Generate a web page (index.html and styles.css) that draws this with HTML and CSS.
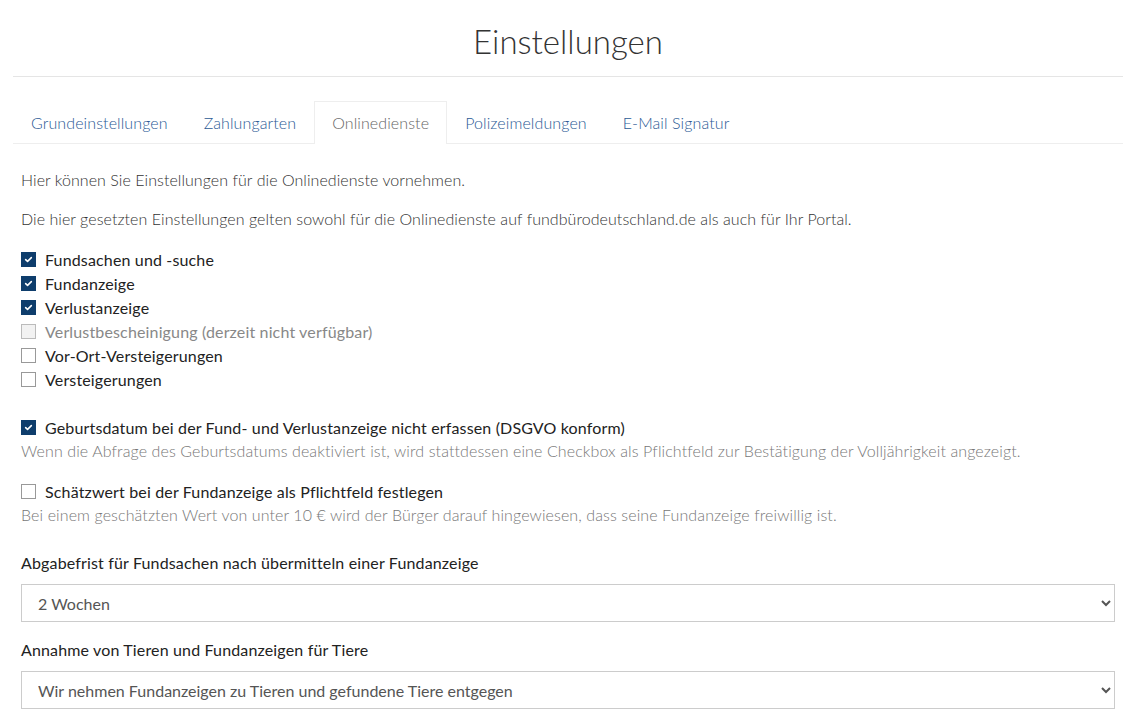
FILE: index.html
```html
<!DOCTYPE html>
<html lang="de">
<head>
    <meta charset="UTF-8">
    <meta name="viewport" content="width=device-width, initial-scale=1.0">
    <title>Einstellungen</title>
    <link rel="stylesheet" href="styles.css">
</head>
<body>
    <div class="page">
        <header class="page-header">
            <h1>Einstellungen</h1>
        </header>

        <nav class="tabs">
            <a class="tab" href="#">Grundeinstellungen</a>
            <a class="tab" href="#">Zahlungarten</a>
            <a class="tab active" href="#">Onlinedienste</a>
            <a class="tab" href="#">Polizeimeldungen</a>
            <a class="tab" href="#">E-Mail Signatur</a>
        </nav>

        <section class="content">
            <p class="intro">Hier können Sie Einstellungen für die Onlinedienste vornehmen.</p>
            <p class="intro">Die hier gesetzten Einstellungen gelten sowohl für die Onlinedienste auf fundbürodeutschland.de als auch für Ihr Portal.</p>

            <div class="check-list">
                <label class="check"><span class="box checked"><svg viewBox="0 0 15 15"><path d="M4.2 7.6l2.2 2.1 4.4-4.4" /></svg></span>Fundsachen und -suche</label>
                <label class="check"><span class="box checked"><svg viewBox="0 0 15 15"><path d="M4.2 7.6l2.2 2.1 4.4-4.4" /></svg></span>Fundanzeige</label>
                <label class="check"><span class="box checked"><svg viewBox="0 0 15 15"><path d="M4.2 7.6l2.2 2.1 4.4-4.4" /></svg></span>Verlustanzeige</label>
                <label class="check disabled"><span class="box"></span>Verlustbescheinigung (derzeit nicht verfügbar)</label>
                <label class="check"><span class="box"></span>Vor-Ort-Versteigerungen</label>
                <label class="check"><span class="box"></span>Versteigerungen</label>
            </div>

            <div class="option">
                <label class="check"><span class="box checked"><svg viewBox="0 0 15 15"><path d="M4.2 7.6l2.2 2.1 4.4-4.4" /></svg></span>Geburtsdatum bei der Fund- und Verlustanzeige nicht erfassen (DSGVO konform)</label>
                <p class="help">Wenn die Abfrage des Geburtsdatums deaktiviert ist, wird stattdessen eine Checkbox als Pflichtfeld zur Bestätigung der Volljährigkeit angezeigt.</p>
            </div>

            <div class="option">
                <label class="check"><span class="box"></span>Schätzwert bei der Fundanzeige als Pflichtfeld festlegen</label>
                <p class="help">Bei einem geschätzten Wert von unter 10 € wird der Bürger darauf hingewiesen, dass seine Fundanzeige freiwillig ist.</p>
            </div>

            <div class="field">
                <label for="abgabefrist">Abgabefrist für Fundsachen nach übermitteln einer Fundanzeige</label>
                <select id="abgabefrist">
                    <option>2 Wochen</option>
                </select>
            </div>

            <div class="field">
                <label for="tiere">Annahme von Tieren und Fundanzeigen für Tiere</label>
                <select id="tiere">
                    <option>Wir nehmen Fundanzeigen zu Tieren und gefundene Tiere entgegen</option>
                </select>
            </div>
        </section>
    </div>
</body>
</html>
```

FILE: styles.css
```css
* {
    margin: 0;
    padding: 0;
    box-sizing: border-box;
}

body {
    font-family: 'Lato', sans-serif;
    font-size: 16px;
    color: #333;
    background-color: #fff;
}

.page {
    padding: 0 7px 0 13px;
}

/* Kopfbereich */
.page-header {
    height: 77px;
    border-bottom: 1px solid #e5e5e5;
    text-align: center;
    padding-top: 19px;
}

.page-header h1 {
    font-size: 33px;
    font-weight: 300;
    line-height: 44px;
    color: #333;
}

/* Reiter */
.tabs {
    display: flex;
    margin-top: 24px;
    border-bottom: 1px solid #eee;
}

.tab {
    display: block;
    padding: 0 17px;
    height: 42px;
    line-height: 41px;
    margin-bottom: -1px;
    border: 1px solid transparent;
    border-bottom: none;
    color: #2b5a95;
    font-weight: 300;
    letter-spacing: 0.1px;
    text-decoration: none;
}

.tab.active {
    color: #666;
    background-color: #fff;
    border-color: #eee;
    height: 43px;
}

/* Inhalt */
.content {
    padding: 26px 8px 0 8px;
}

.intro {
    font-weight: 300;
    line-height: 20px;
    letter-spacing: 0.06px;
    margin-bottom: 19px;
    color: #333;
}

.intro + .intro {
    margin-bottom: 20px;
}

.check-list {
    display: flex;
    flex-direction: column;
    gap: 4px;
    margin-bottom: 28px;
}

.check {
    display: flex;
    align-items: center;
    height: 20px;
    color: #222;
    letter-spacing: 0.15px;
}

.check.disabled {
    color: #888;
}

.box {
    width: 15px;
    height: 15px;
    border: 1px solid #999;
    background-color: #fff;
    margin-right: 9px;
    flex-shrink: 0;
    display: flex;
}

.check.disabled .box {
    background-color: #f2f2f2;
    border-color: #bbb;
}

.box.checked {
    background-color: #0e3d6c;
    border-color: #0e3d6c;
}

.box svg {
    width: 13px;
    height: 13px;
    fill: none;
    stroke: #fff;
    stroke-width: 1.8;
    stroke-linecap: round;
    stroke-linejoin: round;
}

.option {
    margin-bottom: 20px;
}

.help {
    margin-top: 4px;
    font-weight: 300;
    color: #777;
    line-height: 20px;
    letter-spacing: 0.1px;
}

.field {
    margin-top: 28px;
}

.field + .field {
    margin-top: 18px;
}

.field label {
    display: block;
    line-height: 20px;
    color: #222;
    letter-spacing: 0.15px;
    margin-bottom: 11px;
}

select {
    width: 100%;
    height: 38px;
    padding: 0 12px;
    border: 1px solid #ccc;
    border-radius: 0;
    background-color: #fff;
    font-family: 'Lato', sans-serif;
    font-size: 16px;
    color: #555;
}
```
